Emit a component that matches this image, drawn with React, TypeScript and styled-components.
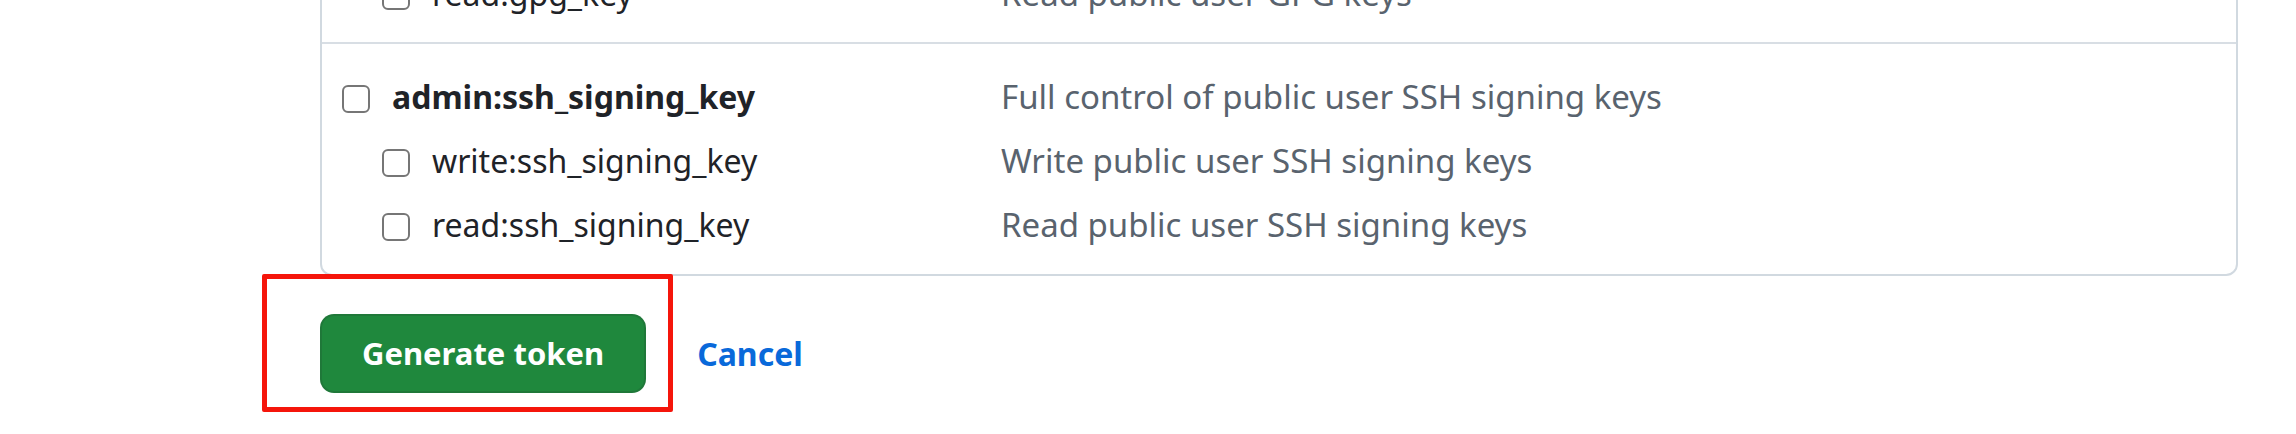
import React from 'react';
import styled, { createGlobalStyle } from 'styled-components';

const GlobalStyle = createGlobalStyle`
    html, body {
        margin: 0;
        padding: 0;
        background: #fff;
        overflow: hidden;
    }
    body {
        font-family: "Noto Sans", "Open Sans", Arial, sans-serif;
        font-size: 32px;
        color: #1f2328;
    }
`;

const Page = styled.div`
    display: flex;
    flex-direction: column;
    padding: 0 58px 0 320px;
    height: 434px;
    overflow: hidden;
`;

// scrolled: only the last row of the GPG group is still in view
const Card = styled.div`
    margin-top: -61px;
    border: 2px solid #d1d9e0;
    border-radius: 12px;
    background: #fff;
`;

const Section = styled.div`
    padding: 23px 0 14px 20px;
    & + & {
        border-top: 2px solid #d8dee4;
    }
    &:last-child {
        padding-bottom: 15px;
    }
`;

const Row = styled.div<{ nested?: boolean }>`
    display: grid;
    grid-template-columns: ${(props) => (props.nested ? '619px' : '659px')} 1fr;
    align-items: center;
    height: 64px;
    padding-left: ${(props) => (props.nested ? '40px' : '0')};
`;

const Label = styled.label<{ strong?: boolean }>`
    display: flex;
    align-items: center;
    gap: 22px;
    font-weight: ${(props) => (props.strong ? 700 : 400)};
    color: #1f2328;
    white-space: nowrap;
`;

const LabelText = styled.span`
    padding-bottom: 5px;
`;

const Check = styled.input`
    appearance: none;
    margin: 0;
    width: 28px;
    height: 28px;
    flex: none;
    border: 2.5px solid #767676;
    border-radius: 6px;
    background: #fff;
`;

const Description = styled.span`
    padding-bottom: 5px;
    color: #59636e;
    font-size: 33px;
    white-space: nowrap;
`;

const Actions = styled.div`
    display: flex;
    align-items: center;
    gap: 51px;
    margin-top: 38px;
`;

const Highlight = styled.div`
    position: relative;
    display: flex;
    &::after {
        content: '';
        position: absolute;
        top: -40px;
        left: -58px;
        right: -27px;
        bottom: -19px;
        border: 5px solid #f5150b;
        border-radius: 2px;
        pointer-events: none;
    }
`;

const PrimaryButton = styled.button`
    height: 79px;
    padding: 0 40px;
    border: 2px solid rgba(31, 35, 40, 0.15);
    border-radius: 14px;
    background: #1f883d;
    color: #fff;
    font-family: inherit;
    font-size: 31px;
    font-weight: 700;
    line-height: 1;
`;

const LinkButton = styled.a`
    color: #0969da;
    font-weight: 700;
    text-decoration: none;
`;

interface IScope {
    name: string;
    description: string;
    nested?: boolean;
}

const gpgScopes: IScope[] = [
    { name: 'read:gpg_key', description: 'Read public user GPG keys', nested: true },
];

const sshScopes: IScope[] = [
    { name: 'admin:ssh_signing_key', description: 'Full control of public user SSH signing keys' },
    { name: 'write:ssh_signing_key', description: 'Write public user SSH signing keys', nested: true },
    { name: 'read:ssh_signing_key', description: 'Read public user SSH signing keys', nested: true },
];

const ScopeGroup: React.FC<{ scopes: IScope[] }> = ({ scopes }) => (
    <Section>
        {scopes.map((scope) => (
            <Row key={scope.name} nested={scope.nested}>
                <Label strong={!scope.nested}>
                    <Check type="checkbox" />
                    <LabelText>{scope.name}</LabelText>
                </Label>
                <Description>{scope.description}</Description>
            </Row>
        ))}
    </Section>
);

const App: React.FC = () => (
    <>
        <GlobalStyle />
        <Page>
            <Card>
                <ScopeGroup scopes={gpgScopes} />
                <ScopeGroup scopes={sshScopes} />
            </Card>
            <Actions>
                <Highlight>
                    <PrimaryButton type="button">Generate token</PrimaryButton>
                </Highlight>
                <LinkButton href="#">Cancel</LinkButton>
            </Actions>
        </Page>
    </>
);

export default App;
